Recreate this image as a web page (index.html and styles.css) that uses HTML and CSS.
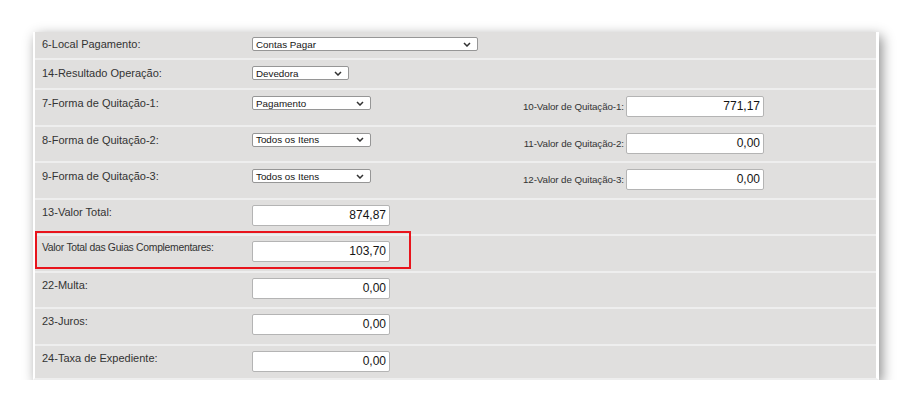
FILE: index.html
```html
<!DOCTYPE html>
<html lang="pt-BR">

<head>
    <meta charset="UTF-8">
    <meta name="viewport" content="width=device-width, initial-scale=1.0">
    <title>Guia | Quitação</title>
    <link rel="stylesheet" href="styles.css">
</head>

<body>
    <section class="painel">
        <div class="linha linhaTopo">
            <span class="rotulo">6-Local Pagamento:</span>
            <div class="combo comboLargo">Contas Pagar <svg viewBox="0 0 8 5"><polyline points="1,1 4,4 7,1" /></svg></div>
        </div>
        <div class="linha linhaSegunda">
            <span class="rotulo">14-Resultado Operação:</span>
            <div class="combo comboCurto">Devedora <svg viewBox="0 0 8 5"><polyline points="1,1 4,4 7,1" /></svg></div>
        </div>
        <div class="linha">
            <span class="rotulo">7-Forma de Quitação-1:</span>
            <div class="combo comboMedio">Pagamento <svg viewBox="0 0 8 5"><polyline points="1,1 4,4 7,1" /></svg></div>
            <span class="rotuloDir">10-Valor de Quitação-1:</span>
            <div class="campo">771,17</div>
        </div>
        <div class="linha">
            <span class="rotulo">8-Forma de Quitação-2:</span>
            <div class="combo comboMedio">Todos os Itens <svg viewBox="0 0 8 5"><polyline points="1,1 4,4 7,1" /></svg></div>
            <span class="rotuloDir">11-Valor de Quitação-2:</span>
            <div class="campo">0,00</div>
        </div>
        <div class="linha">
            <span class="rotulo">9-Forma de Quitação-3:</span>
            <div class="combo comboMedio">Todos os Itens <svg viewBox="0 0 8 5"><polyline points="1,1 4,4 7,1" /></svg></div>
            <span class="rotuloDir">12-Valor de Quitação-3:</span>
            <div class="campo">0,00</div>
        </div>
        <div class="linha linhaValor">
            <span class="rotulo">13-Valor Total:</span>
            <div class="campo">874,87</div>
        </div>
        <div class="linha linhaValor">
            <span class="rotulo rotuloLongo">Valor Total das Guias Complementares:</span>
            <div class="campo">103,70</div>
            <div class="destaque"></div>
        </div>
        <div class="linha linhaValor">
            <span class="rotulo">22-Multa:</span>
            <div class="campo">0,00</div>
        </div>
        <div class="linha linhaValor">
            <span class="rotulo">23-Juros:</span>
            <div class="campo">0,00</div>
        </div>
        <div class="linha linhaValor">
            <span class="rotulo">24-Taxa de Expediente:</span>
            <div class="campo">0,00</div>
        </div>
    </section>
</body>

</html>
```

FILE: styles.css
```css
html {
    background-color: white;
}

body {
    margin: 0;
    padding: 32px 0 0 33px;
    font-family: "Liberation Sans", Arial, sans-serif;
    color: rgb(51, 51, 51);
}

.painel {
    box-sizing: border-box;
    width: 846px;
    height: 348px;
    background-color: rgb(224, 223, 222);
    border-left: 2px solid white;
    border-right: 3px solid white;
    border-bottom: 2px solid rgb(238, 238, 238);
    box-shadow: 3px 4px 12px rgba(0, 0, 0, 0.45);
}

.linha {
    position: relative;
    box-sizing: border-box;
    display: grid;
    grid-template-columns: 217px 260px 114px 138px;
    align-items: start;
    height: 36.5px;
    padding-top: 6px;
    border-top: 2px solid rgb(238, 238, 238);
}

.linhaTopo {
    height: 26px;
    padding-top: 5px;
    border-top: none;
}

.linhaSegunda {
    height: 30px;
}

.linhaValor {
    padding-top: 5px;
}

.rotulo {
    padding-left: 7px;
    font-size: 11px;
    line-height: 14px;
    white-space: nowrap;
}

.rotuloLongo {
    font-size: 10.4px;
    letter-spacing: -0.3px;
}

.rotuloDir {
    padding-right: 2px;
    text-align: right;
    font-size: 9.8px;
    letter-spacing: -0.1px;
    line-height: 22px;
    white-space: nowrap;
}

.combo {
    box-sizing: border-box;
    display: flex;
    justify-content: space-between;
    align-items: center;
    height: 14px;
    padding: 0 6px 0 3px;
    background-color: white;
    border: 1px solid rgb(150, 150, 150);
    border-radius: 2px;
    font-size: 9.8px;
    color: rgb(20, 20, 20);
}

.combo svg {
    width: 8px;
    height: 5px;
    fill: none;
    stroke: rgb(50, 50, 50);
    stroke-width: 1.5;
}

.comboLargo {
    width: 226px;
}

.comboCurto {
    width: 97px;
}

.comboMedio {
    width: 119px;
}

.campo {
    box-sizing: border-box;
    width: 138px;
    height: 21px;
    padding-right: 3px;
    background-color: white;
    border: 1px solid rgb(180, 180, 180);
    border-radius: 2px;
    text-align: right;
    font-size: 12px;
    line-height: 19px;
    color: rgb(20, 20, 20);
}

.linhaValor .campo {
    grid-column: 2;
}

.destaque {
    position: absolute;
    left: 0;
    top: -5px;
    width: 376px;
    height: 38px;
    box-sizing: border-box;
    border: 2px solid rgb(232, 20, 28);
}
```
